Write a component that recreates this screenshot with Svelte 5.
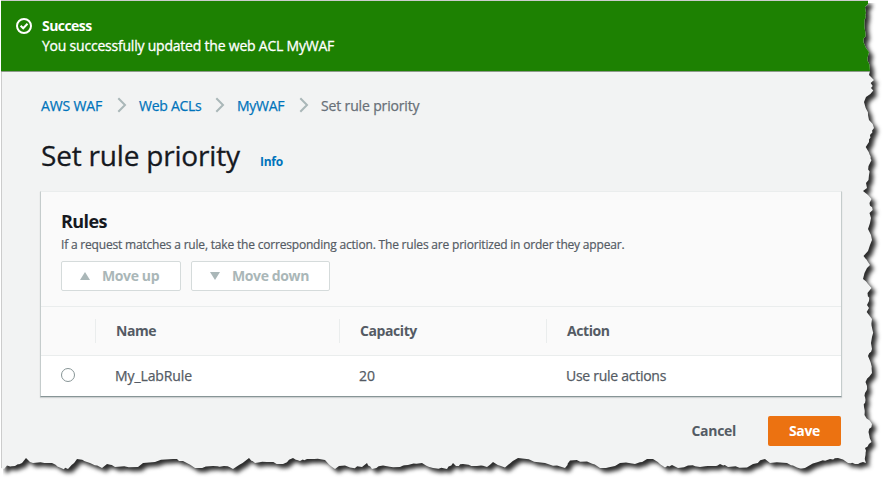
<script>
  const outline = [
    [1, 0], [868, 0], [868, 4], [865, 7], [866, 13], [864.5, 20], [865.5, 33], [863.5, 42], [866, 48],
    [869, 52], [867.5, 58], [869.5, 65], [870, 71], [869, 75], [871, 77], [874, 80], [870.7, 83],
    [872.7, 86], [871, 88], [873.3, 90.5], [866, 97], [864, 102], [865.7, 108], [868, 115], [869, 120],
    [872.7, 124], [874, 128], [870, 135], [869, 142], [865.7, 147], [868.7, 152], [870.7, 159],
    [871.5, 160], [868.5, 166], [869, 175], [868.5, 180], [866, 183], [867, 188], [863, 191],
    [868, 195], [871.5, 199], [869.5, 203], [872.7, 210], [869.5, 213], [871, 218], [870, 223],
    [868, 229], [871, 235], [872, 240], [870, 245], [868, 251], [863.5, 256], [868, 262],
    [870, 265], [867, 268], [864.5, 273], [863, 279], [868, 284], [871.5, 288], [867.5, 293],
    [869, 301], [867, 305], [869, 308], [866.7, 312], [869, 315], [872, 319], [872.5, 330],
    [872, 337], [871, 343], [872, 349], [868, 356], [870.5, 362], [872, 373], [865.5, 382],
    [867, 386], [865, 393], [865.5, 400], [864, 407], [864.5, 415], [872, 424], [868.5, 432],
    [871.5, 442], [865, 448], [865.5, 455], [866, 463], [863, 462], [855, 464], [848, 463],
    [843, 459.5], [838, 458], [830, 459], [818, 462], [805, 468], [797, 467.5], [787, 463],
    [770, 463], [765, 459], [753, 464], [747, 467.5], [728, 467], [720, 464], [713, 466],
    [700, 467], [688, 465.5], [678, 468], [672, 465], [665, 467.5], [653, 459], [647, 459],
    [635, 464], [620, 463], [615, 466], [600, 468], [587, 461.5], [570, 460.5], [565, 468],
    [545, 463], [518, 458], [505, 467.5], [493, 462], [487, 467], [477, 466], [463, 464],
    [456, 466], [453, 463], [447, 469], [433, 468], [422, 463], [408, 465], [400, 467],
    [383, 465.5], [372, 469], [367, 463], [362, 467], [350, 467.5], [345, 465.5], [339, 466],
    [335, 469], [325, 460], [307, 459], [300, 461], [293, 458], [283, 464], [267, 462],
    [255, 463], [249, 458], [233, 469], [224, 466], [213, 466], [195, 468], [183, 461],
    [173, 459], [143, 463], [138, 467], [115, 467], [107, 464], [102, 468], [90, 463],
    [77, 459], [68, 469], [61, 468], [52, 463], [33, 463], [30, 462], [26, 458], [22, 463],
    [15, 466], [7, 465.5], [4, 469], [1, 468]
  ];

  // Adds a small notch in the middle of the longer torn segments.
  const torn = outline.flatMap(([x, y], i) => {
    const next = outline[i + 1];
    if (!next || i < 2) return [[x, y]];
    const dx = next[0] - x;
    const dy = next[1] - y;
    if (Math.hypot(dx, dy) < 7) return [[x, y]];
    const n = 0.9 * Math.sin(i * 2.4);
    const m = 0.9 * Math.cos(i * 1.7);
    const horizontal = Math.abs(dx) > Math.abs(dy);
    return [
      [x, y],
      [x + dx * 0.4 + (horizontal ? 0 : n), y + dy * 0.4 + (horizontal ? n : 0)],
      [x + dx * 0.6 + (horizontal ? 0 : m), y + dy * 0.6 + (horizontal ? m : 0)]
    ];
  });
  const points = torn.map((p) => p.join(',')).join(' ');
  const clip = `polygon(${torn.map(([x, y]) => `${x}px ${y}px`).join(', ')})`;

  const crumbs = [
    { label: 'AWS WAF', w: 62 },
    { label: 'Web ACLs', w: 62 },
    { label: 'MyWAF', w: 48 }
  ];
</script>

<div class="shell">
  <svg class="shadow" width="884" height="479" viewBox="0 0 884 479" aria-hidden="true">
    <defs><clipPath id="below"><rect x="3" y="3" width="881" height="476" /></clipPath></defs>
    <g clip-path="url(#below)"><polygon class="cast" {points} transform="translate(4 4)" /></g>
  </svg>
  <div class="page" style:clip-path={clip}>
    <header class="flash">
      <svg width="16" height="16" viewBox="0 0 16 16" fill="none" stroke="#fff" stroke-width="2">
        <circle cx="8" cy="8" r="7" />
        <path d="M4.6 7.8 7.2 10.3 11.5 5.8" />
      </svg>
      <div>
        <div class="flash-title">Success</div>
        <div class="flash-text">You successfully updated the web ACL MyWAF</div>
      </div>
    </header>
    <main>
      <nav>
        {#each crumbs as c}
          <a style:width="{c.w}px">{c.label}</a>
          <svg width="10" height="16" viewBox="0 0 10 16" fill="none" stroke="#aab7b8" stroke-width="2">
            <path d="M1.3 1.2 8 8 1.3 14.8" />
          </svg>
        {/each}
        <span>Set rule priority</span>
      </nav>
      <div class="heading"><h1>Set rule priority</h1><a class="info">Info</a></div>
      <section class="card">
        <div class="card-head">
          <h2>Rules</h2>
          <p>If a request matches a rule, take the corresponding action. The rules are prioritized in order they appear.</p>
          <div class="buttons">
            <button class="up" disabled>
              <svg width="10" height="8" viewBox="0 0 10 8"><path d="M5 0 10 8H0z" fill="#aab7b8" /></svg>Move up
            </button>
            <button class="down" disabled>
              <svg width="10" height="8" viewBox="0 0 10 8"><path d="M0 0H10L5 8z" fill="#aab7b8" /></svg>Move down
            </button>
          </div>
        </div>
        <div class="row thead">
          <div></div><div>Name</div><div>Capacity</div><div>Action</div>
        </div>
        <div class="row body">
          <div><i class="radio"></i></div><div class="rule">My_LabRule</div><div>20</div><div class="act">Use rule actions</div>
        </div>
      </section>
      <footer>
        <span class="cancel">Cancel</span>
        <span class="save">Save</span>
      </footer>
    </main>
  </div>
</div>

<style>
  :global(body) { background: #fff; overflow: hidden; }
  .shell { position: relative; width: 884px; height: 479px; font-family: "Open Sans", "Noto Sans", sans-serif; font-size: 14px; color: #545b64; }
  .shell * { box-sizing: border-box; white-space: nowrap; }
  .shadow { position: absolute; inset: 0; }
  .cast { fill: #2c2c2c; filter: blur(2.2px); }
  .page { position: relative; height: 479px; padding-left: 1px; background: #f2f3f3; }
  .flash { display: flex; gap: 10px; height: 72px; padding: 17px 15px 0; background: #1d8102; color: #fff; border-top: 1px solid #ccc; border-bottom: 1px solid #8d9a8a; line-height: 20px; }
  .flash svg { flex: none; }
  .flash > div { margin-top: -2px; }
  .flash-title { font-weight: 700; letter-spacing: -.55px; }
  .flash-text { letter-spacing: -.215px; -webkit-text-stroke: .3px; }
  main { height: 407px; padding: 23px 0 0 39px; border-left: 1px solid #ccc; }
  nav { display: flex; align-items: center; height: 20px; color: #687078; letter-spacing: -.15px; -webkit-text-stroke: .25px; }
  nav a { flex: none; }
  nav a:nth-of-type(n + 2) { letter-spacing: -.27px; }
  nav svg { margin: 0 12px 0 14px; flex: none; }
  a { color: #0073bb; }
  .heading { display: flex; align-items: baseline; height: 76px; padding-top: 20px; }
  h1 { margin: 0; width: 219px; font-size: 28px; line-height: 40px; font-weight: 400; color: #16191f; letter-spacing: -.19px; -webkit-text-stroke: .3px; }
  .info { font-size: 12px; font-weight: 700; letter-spacing: -.25px; }
  .card { width: 802px; height: 206px; margin-left: -1px; background: #fff; border: 1px solid #eaeded; border-left-color: #c5cccc; border-right-color: #c5cccc; border-bottom: 1px solid #879596; box-shadow: 0 1px 1px rgba(0, 28, 36, .15); }
  .card-head { height: 115px; padding: 18px 20px 0; background: #fafafa; border-bottom: 1px solid #eaeded; }
  h2 { margin: 0; font-size: 18px; line-height: 22px; font-weight: 700; color: #16191f; letter-spacing: -.6px; }
  p { margin: 0; font-size: 12px; line-height: 20px; padding-top: 3px; letter-spacing: -.19px; -webkit-text-stroke: .2px; }
  .buttons { display: flex; gap: 10px; margin-top: 6px; }
  button { display: flex; align-items: center; gap: 12px; height: 30px; padding: 0 0 2px 18px; font: inherit; font-weight: 700; letter-spacing: -.38px; color: #aab7b8; background: #fff; border: 1px solid #d5dbdb; border-radius: 2px; }
  button svg { position: relative; top: 1px; }
  .up { width: 120px; }
  .down { width: 139px; }
  .row { display: grid; grid-template-columns: 54px 244px 207px 1fr; align-items: center; }
  .thead { height: 49px; background: #fafafa; border-bottom: 1px solid #eaeded; font-weight: 700; letter-spacing: -.42px; }
  .thead > div + div { height: 24px; padding-left: 20px; border-left: 1px solid #eaeded; line-height: 24px; }
  .body { height: 39px; }
  .body > div + div { padding-left: 20px; letter-spacing: -.1px; -webkit-text-stroke: .25px; }
  .body > .act { letter-spacing: -.27px; }
  .radio { display: block; width: 14px; height: 14px; margin: 0 0 1px 20px; border: 1px solid #879596; border-radius: 50%; background: #fff; }
  footer { display: flex; justify-content: flex-end; align-items: center; gap: 32px; width: 800px; margin-top: 19px; height: 30px; font-weight: 700; line-height: 30px; letter-spacing: -.3px; }
  .save { width: 73px; height: 30px; text-align: center; color: #fff; background: #ec7211; border-radius: 2px; }
</style>
